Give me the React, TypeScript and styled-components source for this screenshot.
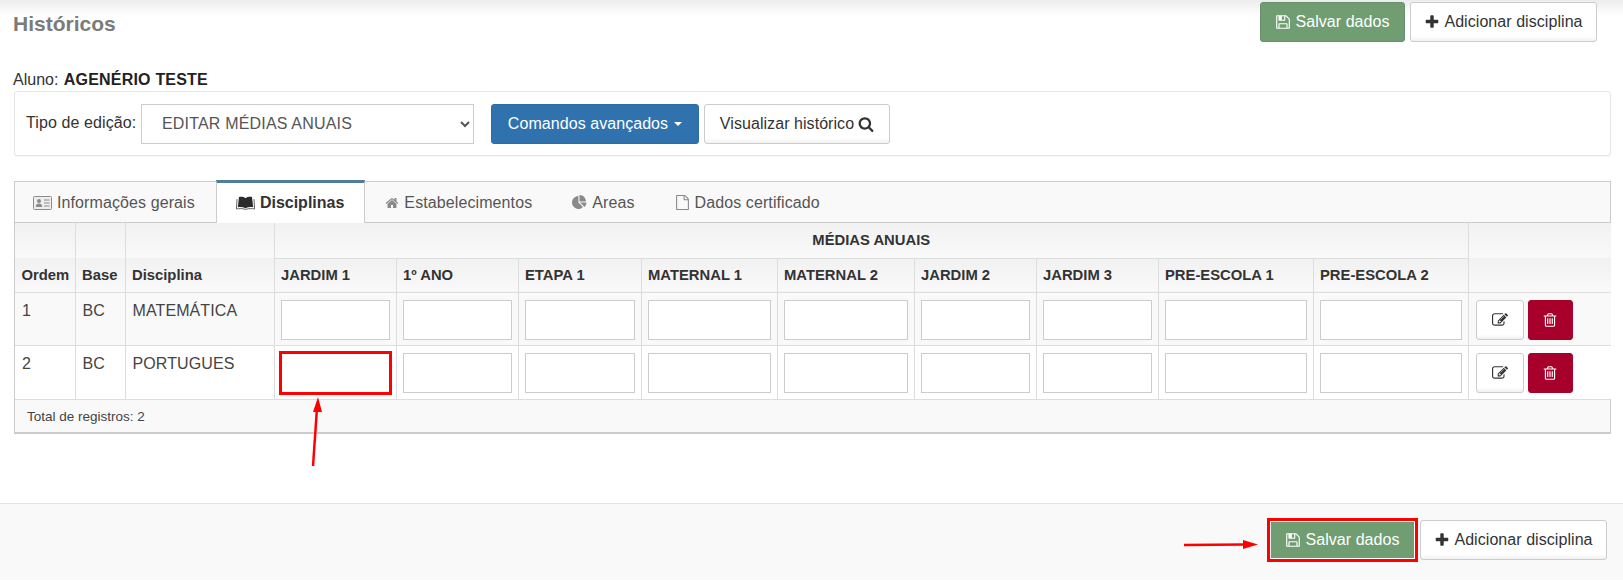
import React from "react";
import styled, { createGlobalStyle, css } from "styled-components";

const Global = createGlobalStyle`
  html, body { margin: 0; padding: 0; background: #fff; }
  body { font-family: "Liberation Sans", Arial, sans-serif; font-size: 16px; color: #333; }
`;

const paths = {
  save: "M512 1536h768v-384h-768v384zm896 0h128v-896q0-14-10-38.500t-20-34.500l-281-281q-10-10-34-20t-39-10v416q0 40-28 68t-68 28h-576q-40 0-68-28t-28-68v-416h-128v1280h128v-416q0-40 28-68t68-28h832q40 0 68 28t28 68v416zm-384-928v-320q0-13-9.500-22.500t-22.500-9.500h-192q-13 0-22.500 9.500t-9.500 22.500v320q0 13 9.500 22.500t22.500 9.500h192q13 0 22.500-9.500t9.500-22.500zm640 32v928q0 40-28 68t-68 28h-1344q-40 0-68-28t-28-68v-1344q0-40 28-68t68-28h928q40 0 88 20t76 48l280 280q28 28 48 76t20 88z",
  edit: "M888 1184l116-116-152-152-116 116v56h96v96h56zm440-720q-16-16-33 1l-350 350q-17 17-1 33t33-1l350-350q17-17 1-33zm80 594v190q0 119-84.500 203.500t-203.500 84.500h-832q-119 0-203.500-84.500t-84.500-203.500v-832q0-119 84.500-203.500t203.500-84.500h832q63 0 117 25 15 7 18 23 3 17-9 29l-49 49q-14 14-32 8-23-6-45-6h-832q-66 0-113 47t-47 113v832q0 66 47 113t113 47h832q66 0 113-47t47-113v-126q0-13 9-22l64-64q15-15 35-7t20 29zm-96-738l288 288-672 672h-288v-288zm444 132l-92 92-288-288 92-92q28-28 68-28t68 28l152 152q28 28 28 68t-28 68z",
  trash: "M704 736v576q0 14-9 23t-23 9h-64q-14 0-23-9t-9-23v-576q0-14 9-23t23-9h64q14 0 23 9t9 23zm256 0v576q0 14-9 23t-23 9h-64q-14 0-23-9t-9-23v-576q0-14 9-23t23-9h64q14 0 23 9t9 23zm256 0v576q0 14-9 23t-23 9h-64q-14 0-23-9t-9-23v-576q0-14 9-23t23-9h64q14 0 23 9t9 23zm128 724v-948h-896v948q0 22 7 40.500t14.500 27 10.500 8.500h832q3 0 10.500-8.500t14.500-27 7-40.500zm-672-1076h448l-48-117q-7-9-17-11h-317q-10 2-17 11zm928 32v64q0 14-9 23t-23 9h-96v948q0 83-47 143.500t-113 60.500h-832q-66 0-113-58.500t-47-141.500v-952h-96q-14 0-23-9t-9-23v-64q0-14 9-23t23-9h309l70-167q15-37 54-63t79-26h320q40 0 79 26t54 63l70 167h309q14 0 23 9t9 23z",
  plus: "M1600 736v192q0 40-28 68t-68 28h-416v416q0 40-28 68t-68 28h-192q-40 0-68-28t-28-68v-416h-416q-40 0-68-28t-28-68v-192q0-40 28-68t68-28h416v-416q0-40 28-68t68-28h192q40 0 68 28t28 68v416h416q40 0 68 28t28 68z",
  search: "M1216 832q0-185-131.500-316.500t-316.500-131.500-316.500 131.500-131.500 316.500 131.500 316.500 316.500 131.500 316.500-131.500 131.500-316.500zm512 832q0 52-38 90t-90 38q-54 0-90-38l-343-342q-179 124-399 124-143 0-273.500-55.500t-225-150-150-225-55.500-273.500 55.500-273.500 150-225 225-150 273.500-55.500 273.500 55.500 225 150 150 225 55.500 273.500q0 220-124 399l343 343q37 37 37 90z",
  home: "M1472 992v480q0 26-19 45t-45 19h-384v-384h-256v384h-384q-26 0-45-19t-19-45v-480q0-1 .5-3t.5-3l575-474 575 474q1 2 1 6zm223-69l-62 74q-8 9-21 11h-3q-13 0-21-7l-692-577-692 577q-12 8-24 7-13-2-21-11l-62-74q-8-10-7-23.500t11-21.500l719-599q32-26 76-26t76 26l244 204v-195q0-14 9-23t23-9h192q14 0 23 9t9 23v408l219 182q10 8 11 21.500t-7 23.500z",
  pie: "M768 890l546 546q-106 108-247.500 168t-298.500 60q-209 0-385.500-103t-279.500-279.500-103-385.500 103-385.500 279.500-279.500 385.500-103v762zm187 6h773q0 157-60 298.500t-168 247.500zm709-128h-768v-768q209 0 385.500 103t279.500 279.500 103 385.500z",
  file: "M1596 380q28 28 48 76t20 88v1152q0 40-28 68t-68 28h-1344q-40 0-68-28t-28-68v-1600q0-40 28-68t68-28h896q40 0 88 20t76 48zm-444-244v376h376q-10-29-22-41l-313-313q-12-12-41-22zm384 1528v-1024h-416q-40 0-68-28t-28-68v-416h-768v1536h1280z",
};

const GlyphSvg = styled.svg`
  flex: none;
  display: block;
  fill: currentColor;
`;

function Glyph({ name, size }: { name: keyof typeof paths; size: number }) {
  return (
    <GlyphSvg width={size} height={size} viewBox="0 0 1792 1792">
      <path d={paths[name]} />
    </GlyphSvg>
  );
}

function CardIcon() {
  return (
    <GlyphSvg width="19" height="14" viewBox="0 0 19 14">
      <rect x="0.5" y="0.5" width="18" height="13" rx="1" fill="#eeeeee" stroke="#8c8c8c" />
      <circle cx="6" cy="5" r="2" fill="#8c8c8c" />
      <path d="M2.8 11c0-2.400 1.400-3.400 3.200-3.400S9.200 8.600 9.200 11z" fill="#8c8c8c" />
      <path d="M11 4h5.500M11 7h5.500M11 10h5.500" stroke="#8c8c8c" strokeWidth="1" />
    </GlyphSvg>
  );
}

function BookIcon() {
  return (
    <GlyphSvg width="19" height="14" viewBox="0 0 19 14">
      <path d="M9.500 2.200C7.800.9 5.300.6 3 1L1.800 11.300c2.800-.5 5.500-.2 7.700 1 2.200-1.200 4.900-1.500 7.700-1L16 1c-2.300-.4-4.800-.1-6.500 1.200z" fill="#2b2b2b" />
      <path d="M1 3.200.4 13c3-.6 6-.6 9.100.4 3.100-1 6.100-1 9.100-.4L18 3.200" fill="none" stroke="#555" strokeWidth="0.9" />
    </GlyphSvg>
  );
}

const Page = styled.div`
  position: relative;
  width: 1623px;
  height: 582px;
  overflow: hidden;
  background: #fff;
`;

const Header = styled.header`
  display: flex;
  justify-content: space-between;
  align-items: flex-start;
  height: 70px;
  padding: 2px 26px 0 13px;
  box-sizing: border-box;
  background: linear-gradient(to bottom, #ececec 0, #ffffff 16px);
`;

const Title = styled.h1`
  margin: 10px 0 0;
  font-size: 21px;
  line-height: 24px;
  font-weight: 700;
  color: #7b7b7b;
`;

const ButtonRow = styled.div`
  display: flex;
  align-items: center;
  gap: 5px;
`;

const Button = styled.button<{ $variant?: "default" | "success" | "primary" | "danger"; $marked?: boolean }>`
  display: inline-flex;
  align-items: center;
  justify-content: center;
  gap: 4px;
  height: 40px;
  padding: 0;
  box-sizing: border-box;
  font: 16px "Liberation Sans", Arial, sans-serif;
  letter-spacing: 0.06px;
  border-radius: 3px;
  border: 1px solid #ccc;
  background: linear-gradient(to bottom, #fff 88%, #f1f1f1 100%);
  color: #333;
  ${(p) =>
    p.$variant === "success" &&
    css`
      background: #709d72;
      border-color: #65926a;
      color: #fff;
    `}
  ${(p) =>
    p.$variant === "primary" &&
    css`
      background: #3072ad;
      border-color: #2e6da4;
      color: #fff;
    `}
  ${(p) =>
    p.$variant === "danger" &&
    css`
      background: #a7002b;
      border-color: #a7002b;
      color: #fff;
    `}
  ${(p) =>
    p.$marked &&
    css`
      height: 38px;
      margin: 1px 0;
      outline: 3px solid #f00;
      border-color: #fff;
      border-radius: 0;
    `}
`;

const SaveButton = styled(Button)`
  width: 145px;
`;
const AddButton = styled(Button)`
  width: 187px;
`;

const Main = styled.main`
  padding: 0 12px 0 14px;
`;

const Student = styled.div`
  height: 21px;
  line-height: 19px;
  margin-left: -1px;
  color: #333;
  b { color: #222; letter-spacing: 0.2px; margin-left: 1px; }
`;

const Panel = styled.section`
  display: flex;
  align-items: center;
  height: 65px;
  box-sizing: border-box;
  padding: 0 12px 0 11px;
  border: 1px solid #e6e6e6;
  border-radius: 3px;
  box-shadow: 0 1px 1px rgba(0, 0, 0, 0.05);
  margin-bottom: 25px;
`;

const FieldLabel = styled.label`
  width: 115px;
  margin-top: -2px;
  letter-spacing: 0.1px;
  color: #333;
`;

const Select = styled.select`
  width: 333px;
  height: 40px;
  box-sizing: border-box;
  padding: 0 0 0 16px;
  margin-right: 17px;
  font: 16px "Liberation Sans", Arial, sans-serif;
  letter-spacing: 0.18px;
  color: #555;
  background: #fff;
  border: 1px solid #ccc;
  border-radius: 0;
`;

const Caret = styled.span`
  width: 0;
  height: 0;
  margin-left: 1px;
  border-top: 4px solid currentColor;
  border-left: 4.500px solid transparent;
  border-right: 4.500px solid transparent;
`;

const AdvancedButton = styled(Button)`
  width: 208px;
  margin-right: 5px;
  gap: 5px;
`;

const ViewButton = styled(Button)`
  width: 186px;
`;

const TabsBox = styled.section`
  border: 1px solid #ccc;
  border-bottom: 2px solid #ccc;
`;

const TabStrip = styled.nav`
  display: flex;
  height: 40px;
  background: #f9f9f9;
  border-bottom: 1px solid #ccc;
`;

const Tab = styled.a<{ $active?: boolean }>`
  display: flex;
  align-items: center;
  gap: 5px;
  padding: 1px 20px 0;
  box-sizing: border-box;
  height: 40px;
  color: #555;
  font-size: 16px;
  letter-spacing: 0.1px;
  svg { color: #8a8a8a; }
  &:first-child { padding: 1px 21px 0 18px; }
  ${(p) =>
    p.$active &&
    css`
      position: relative;
      height: 43px;
      margin-top: -2px;
      padding: 0 20px 0 19px;
      background: #fff;
      color: #333;
      font-weight: 700;
      letter-spacing: 0;
      border-top: 3px solid #4d8096;
      border-left: 1px solid #ccc;
      border-right: 1px solid #ccc;
      svg { color: #333; }
    `}
`;

const Table = styled.table`
  width: 100%;
  table-layout: fixed;
  border-collapse: collapse;
`;

const HeadCell = styled.th<{ $tall?: boolean; $center?: boolean; $rule?: boolean }>`
  height: ${(p) => (p.$tall ? 35 : 34)}px;
  padding: 0 6px 0 6.5px;
  box-sizing: border-box;
  text-align: ${(p) => (p.$center ? "center" : "left")};
  font-size: 14.8px;
  font-weight: 700;
  color: #333;
  background: linear-gradient(to bottom, #f1f1f1, #f9f9f9);
  border-left: 1px solid #ddd;
  border-bottom: ${(p) => (p.$rule ? "1px solid #ddd" : "0")};
  &:first-child { border-left: 0; }
`;

const BodyRow = styled.tr<{ $odd?: boolean }>`
  background: ${(p) => (p.$odd ? "#f9f9f9" : "#fff")};
  &:last-child td { height: 54px; padding-bottom: 6px; }
`;

const Cell = styled.td`
  height: 53px;
  padding: 7px 6px 5px 6px;
  box-sizing: border-box;
  vertical-align: top;
  font-size: 16px;
  line-height: 22px;
  letter-spacing: 0.1px;
  color: #444;
  border-left: 1px solid #ddd;
  border-top: 1px solid #ddd;
  &:first-child { border-left: 0; }
`;

const TextCell = styled(Cell)`
  padding-left: 7px;
`;

const GradeInput = styled.input<{ $marked?: boolean }>`
  display: block;
  width: 100%;
  height: 40px;
  box-sizing: border-box;
  border: 1px solid #ccc;
  background: #fff;
  margin: 0;
  padding: 0;
  border-radius: 0;
  ${(p) =>
    p.$marked &&
    css`
      outline: 3px solid #f00;
      outline-offset: -1px;
    `}
`;

const RowActions = styled.div`
  display: flex;
  gap: 4px;
  padding-left: 1px;
`;

const EditButton = styled(Button)`
  width: 48px;
  color: #333;
`;
const DeleteButton = styled(Button)`
  width: 45px;
`;

const TotalBar = styled.div`
  height: 32px;
  padding: 0 12px;
  display: flex;
  align-items: center;
  background: #f9f9f9;
  border-top: 1px solid #ddd;
  font-size: 13.5px;
  color: #444;
`;

const Footer = styled.footer`
  position: absolute;
  left: 0;
  right: 0;
  top: 503px;
  height: 77px;
  box-sizing: border-box;
  border-top: 1px solid #e2e2e2;
  background: #f9f9f9;
  display: flex;
  justify-content: flex-end;
  align-items: flex-start;
  padding: 16px 16px 0 0;
`;

const Arrow = styled.svg`
  position: absolute;
  left: 0;
  top: 0;
  pointer-events: none;
`;

const columns = [60, 50, 149, 122, 122, 123, 136, 137, 122, 122, 155, 155, 143];
const terms = ["JARDIM 1", "1º ANO", "ETAPA 1", "MATERNAL 1", "MATERNAL 2", "JARDIM 2", "JARDIM 3", "PRE-ESCOLA 1", "PRE-ESCOLA 2"];
const rows = [
  { order: 1, base: "BC", name: "MATEMÁTICA" },
  { order: 2, base: "BC", name: "PORTUGUES" },
];

export default function App() {
  return (
    <Page>
      <Global />
      <Header>
        <Title>Históricos</Title>
        <ButtonRow>
          <SaveButton $variant="success"><Glyph name="save" size={16} /> Salvar dados</SaveButton>
          <AddButton><Glyph name="plus" size={16} /> Adicionar disciplina</AddButton>
        </ButtonRow>
      </Header>
      <Main>
        <Student>Aluno: <b>AGENÉRIO TESTE</b></Student>
        <Panel>
          <FieldLabel>Tipo de edição:</FieldLabel>
          <Select defaultValue="m">
            <option value="m">EDITAR MÉDIAS ANUAIS</option>
          </Select>
          <AdvancedButton $variant="primary">Comandos avançados <Caret /></AdvancedButton>
          <ViewButton>Visualizar histórico <Glyph name="search" size={16} /></ViewButton>
        </Panel>
        <TabsBox>
          <TabStrip>
            <Tab><CardIcon /> Informações gerais</Tab>
            <Tab $active><BookIcon /> Disciplinas</Tab>
            <Tab><Glyph name="home" size={14} /> Estabelecimentos</Tab>
            <Tab><Glyph name="pie" size={15} /> Areas</Tab>
            <Tab><Glyph name="file" size={15} /> Dados certificado</Tab>
          </TabStrip>
          <Table>
            <colgroup>
              {columns.map((w, i) => (
                <col key={i} style={{ width: w }} />
              ))}
            </colgroup>
            <thead>
              <tr>
                <HeadCell $tall />
                <HeadCell $tall />
                <HeadCell $tall />
                <HeadCell $tall colSpan={9} $center $rule>MÉDIAS ANUAIS</HeadCell>
                <HeadCell $tall />
              </tr>
              <tr>
                <HeadCell>Ordem</HeadCell>
                <HeadCell>Base</HeadCell>
                <HeadCell>Disciplina</HeadCell>
                {terms.map((t) => (
                  <HeadCell key={t}>{t}</HeadCell>
                ))}
                <HeadCell />
              </tr>
            </thead>
            <tbody>
              {rows.map((r, ri) => (
                <BodyRow key={r.order} $odd={ri === 0}>
                  <TextCell>{r.order}</TextCell>
                  <TextCell>{r.base}</TextCell>
                  <TextCell>{r.name}</TextCell>
                  {terms.map((t, ti) => (
                    <Cell key={t}>
                      <GradeInput $marked={ri === 1 && ti === 0} />
                    </Cell>
                  ))}
                  <Cell>
                    <RowActions>
                      <EditButton><Glyph name="edit" size={16} /></EditButton>
                      <DeleteButton $variant="danger"><Glyph name="trash" size={16} /></DeleteButton>
                    </RowActions>
                  </Cell>
                </BodyRow>
              ))}
            </tbody>
          </Table>
          <TotalBar>Total de registros: 2</TotalBar>
        </TabsBox>
      </Main>
      <Footer>
        <ButtonRow>
          <SaveButton $variant="success" $marked><Glyph name="save" size={16} /> Salvar dados</SaveButton>
          <AddButton><Glyph name="plus" size={16} /> Adicionar disciplina</AddButton>
        </ButtonRow>
      </Footer>
      <Arrow width="1623" height="582" viewBox="0 0 1623 582">
        <line x1="313" y1="466" x2="317" y2="408" stroke="#f00" strokeWidth="2.5" />
        <polygon points="318,397 313,412 322,412" fill="#f00" />
        <line x1="1184" y1="545" x2="1245" y2="544.5" stroke="#f00" strokeWidth="2.5" />
        <polygon points="1258,544.5 1243,540 1243,549" fill="#f00" />
      </Arrow>
    </Page>
  );
}
